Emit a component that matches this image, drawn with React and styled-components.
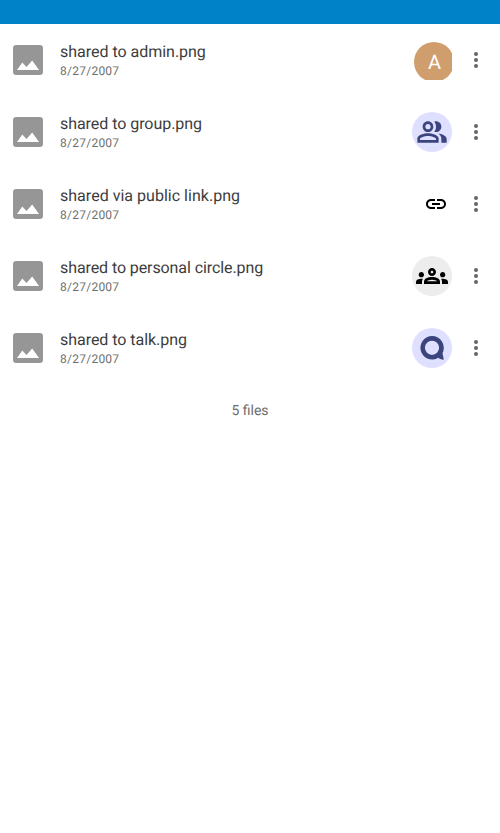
import React from "react";
import styled, { createGlobalStyle } from "styled-components";

const GlobalStyle = createGlobalStyle`
  * { box-sizing: border-box; }
  body {
    margin: 0;
    background: #fff;
    font-family: Roboto, sans-serif;
    text-rendering: geometricPrecision;
  }
`;

const Screen = styled.main`
  min-height: 833px;
  background: #fff;
`;

const StatusBar = styled.header`
  height: 24px;
  background: #0082c9;
`;

const FileList = styled.ul`
  margin: 0;
  padding: 0;
  list-style: none;
`;

const FileRow = styled.li`
  display: flex;
  align-items: center;
  height: 72px;
  padding: 0 12px 0 10px;
`;

const Thumbnail = styled.svg`
  flex: none;
  width: 36px;
  height: 36px;
  margin-right: 14px;
  fill: #969696;
`;

const FileInfo = styled.div`
  flex: 1;
  min-width: 0;
`;

const FileName = styled.div`
  font-size: 16px;
  line-height: 20px;
  letter-spacing: ${(p) => p.$tracking}px;
  color: #3c3c3c;
`;

const FileDate = styled.div`
  margin-top: 1px;
  font-size: 12px;
  line-height: 16px;
  letter-spacing: 0.25px;
  color: #707070;
`;

const ShareSlot = styled.div`
  display: flex;
  align-items: flex-end;
  justify-content: flex-end;
  width: 40px;
  height: 40px;
  overflow: hidden;
`;

const ShareBadge = styled.div`
  display: flex;
  align-items: center;
  justify-content: center;
  width: 40px;
  height: 40px;
  border-radius: 50%;
  background: ${(p) => p.$background};
`;

const AvatarClip = styled.div`
  width: 38px;
  height: 38px;
  overflow: hidden;
`;

const Avatar = styled(ShareBadge)`
  padding-left: 1px;
  color: #fff;
  font-size: 20px;
  line-height: 40px;
`;

const Glyph = styled.svg`
  display: block;
  flex: none;
  width: ${(p) => p.$size}px;
  height: ${(p) => p.$size}px;
  fill: ${(p) => p.$color};
`;

const LinkHolder = styled.div`
  padding: 8px 4px;
`;

const MenuButton = styled.button`
  display: flex;
  margin-left: 12px;
  padding: 0;
  border: 0;
  background: none;
`;

const Summary = styled.footer`
  padding-top: 17px;
  text-align: center;
  font-size: 14px;
  line-height: 20px;
  color: #6c6c6c;
`;

const GROUP =
  "M16.67 13.13C18.04 14.06 19 15.32 19 17v3h4v-3c0-2.18-3.57-3.47-6.33-3.87zM15 12c2.21 0 4-1.79 4-4s-1.79-4-4-4c-.47 0-.91.1-1.33.24C14.5 5.27 15 6.58 15 8s-.5 2.73-1.33 3.76c.42.14.86.24 1.33.24zM9 12c2.21 0 4-1.79 4-4s-1.79-4-4-4-4 1.79-4 4 1.79 4 4 4zm0-6c1.1 0 2 .9 2 2s-.9 2-2 2-2-.9-2-2 .9-2 2-2zM9 13c-2.67 0-8 1.34-8 4v3h16v-3c0-2.66-5.33-4-8-4zm6 5H3v-.99C3.2 16.29 6.3 15 9 15s5.8 1.29 6 2V18z";
const CIRCLE =
  "M4 13c1.1 0 2-.9 2-2s-.9-2-2-2-2 .9-2 2 .9 2 2 2zm1.13 1.1c-.37-.06-.74-.1-1.13-.1-.99 0-1.93.21-2.78.58C.48 14.9 0 15.62 0 16.43V18h4.5v-1.61c0-.83.23-1.61.63-2.29zM20 13c1.1 0 2-.9 2-2s-.9-2-2-2-2 .9-2 2 .9 2 2 2zm4 3.43c0-.81-.48-1.53-1.22-1.85-.85-.37-1.79-.58-2.78-.58-.39 0-.76.04-1.13.1.4.68.63 1.46.63 2.29V18H24v-1.57zm-7.76-2.78c-1.17-.52-2.61-.9-4.24-.9s-3.07.39-4.24.9C6.68 14.13 6 15.21 6 16.39V18h12v-1.61c0-1.18-.68-2.26-1.76-2.74zM8.07 16c.09-.23.13-.39.91-.69.97-.38 1.99-.56 3.02-.56s2.05.18 3.02.56c.77.3.81.46.91.69H8.07zM12 8c.55 0 1 .45 1 1s-.45 1-1 1-1-.45-1-1 .45-1 1-1m0-2c-1.66 0-3 1.34-3 3s1.34 3 3 3 3-1.34 3-3-1.34-3-3-3z";
const LINK =
  "M3.9 12c0-1.71 1.39-3.1 3.1-3.1h4V7H7c-2.76 0-5 2.24-5 5s2.24 5 5 5h4v-1.9H7c-1.71 0-3.1-1.39-3.1-3.1zM8 13h8v-2H8v2zm9-6h-4v1.9h4c1.71 0 3.1 1.39 3.1 3.1s-1.39 3.1-3.1 3.1h-4V17h4c2.76 0 5-2.24 5-5s-2.24-5-5-5z";
const TALK =
  "M12 .1a11.7 11.7 0 1 0 6.2 21.7c1.3.9 3.8 2.1 5.1 1.9 1-.4-.3-3.3-.8-6.5A11.7 11.7 0 0 0 12 .1zm0 4.6a7.1 7.1 0 1 1 0 14.2 7.1 7.1 0 0 1 0-14.2z";

function ShareIndicator({ kind }) {
  switch (kind) {
    case "user":
      return (
        <AvatarClip>
          <Avatar $background="#d09e6d">A</Avatar>
        </AvatarClip>
      );
    case "group":
      return (
        <ShareBadge $background="#dfe0ff">
          <Glyph $size={32} $color="#3b447c" viewBox="0 0 24 24"><path d={GROUP} /></Glyph>
        </ShareBadge>
      );
    case "link":
      return (
        <LinkHolder>
          <Glyph $size={24} $color="#000" viewBox="0 0 24 24"><path d={LINK} /></Glyph>
        </LinkHolder>
      );
    case "circle":
      return (
        <ShareBadge $background="#ededed">
          <Glyph $size={32} $color="#000" viewBox="0 0 24 24"><path d={CIRCLE} /></Glyph>
        </ShareBadge>
      );
    default:
      return (
        <ShareBadge $background="#dfe0ff">
          <Glyph $size={24} $color="#3b447c" viewBox="0 0 24 24"><path d={TALK} /></Glyph>
        </ShareBadge>
      );
  }
}

const files = [
  { name: "shared to admin.png", kind: "user", tracking: -0.02 },
  { name: "shared to group.png", kind: "group", tracking: -0.05 },
  { name: "shared via public link.png", kind: "link", tracking: 0.02 },
  { name: "shared to personal circle.png", kind: "circle", tracking: -0.09 },
  { name: "shared to talk.png", kind: "talk", tracking: -0.04 },
];

export default function App() {
  return (
    <Screen>
      <GlobalStyle />
      <StatusBar />
      <FileList>
        {files.map((file) => (
          <FileRow key={file.name}>
            <Thumbnail viewBox="0 0 36 36">
              <rect x="3" y="3" width="30" height="30" rx="3.3" />
              <path fill="#fff" d="M7 28l5.3-7.4 4.2 4.4 5.7-6.4L29 28z" />
            </Thumbnail>
            <FileInfo>
              <FileName $tracking={file.tracking}>{file.name}</FileName>
              <FileDate>8/27/2007</FileDate>
            </FileInfo>
            <ShareSlot>
              <ShareIndicator kind={file.kind} />
            </ShareSlot>
            <MenuButton>
              <Glyph $size={24} $color="#666" viewBox="0 0 24 24">
                <circle cx="12" cy="6" r="2" />
                <circle cx="12" cy="12" r="2" />
                <circle cx="12" cy="18" r="2" />
              </Glyph>
            </MenuButton>
          </FileRow>
        ))}
      </FileList>
      <Summary>5 files</Summary>
    </Screen>
  );
}
